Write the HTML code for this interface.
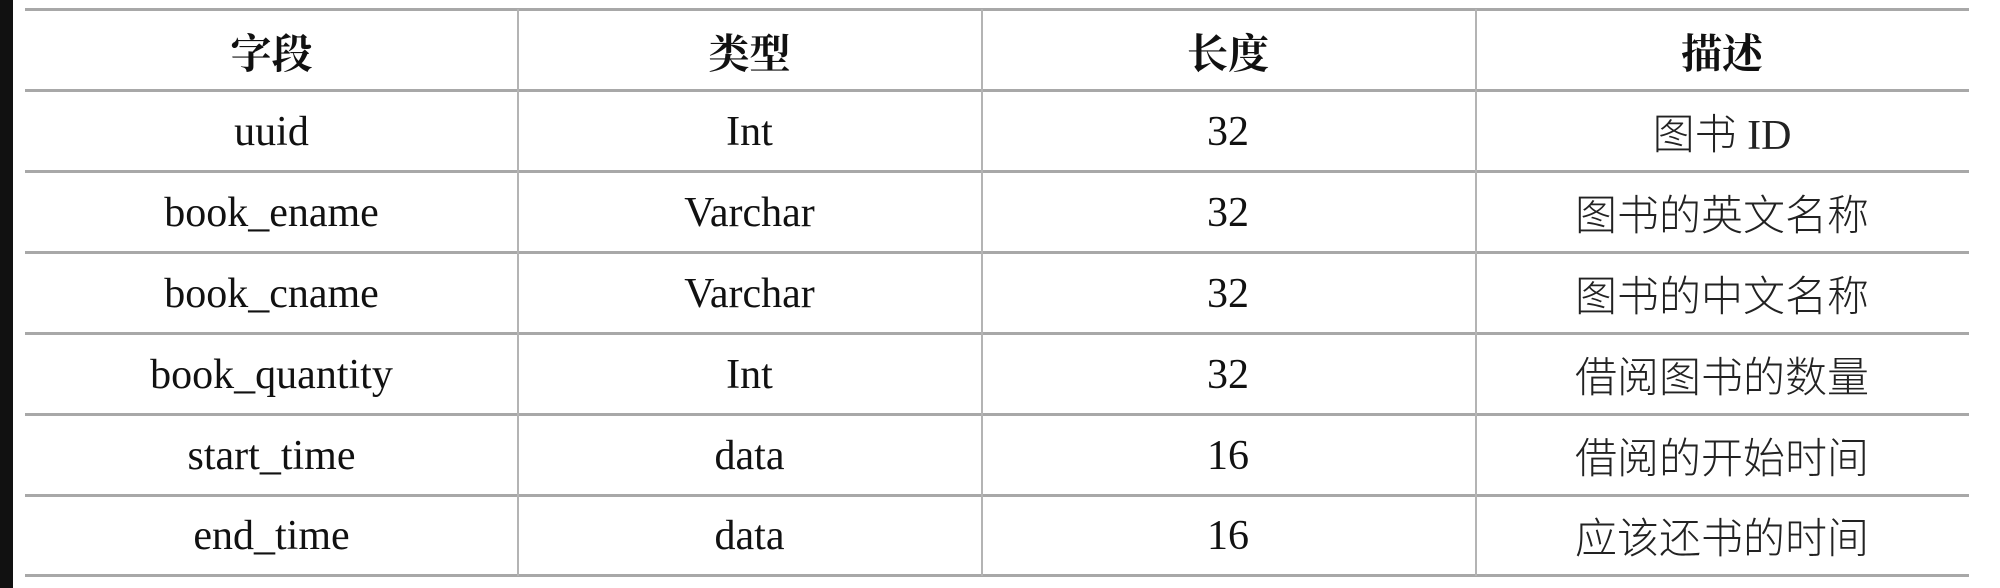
<!DOCTYPE html>
<html><head><meta charset="utf-8"><style>
html,body{margin:0;padding:0;background:#fff;}
body{width:2000px;height:588px;position:relative;overflow:hidden;}
.strip{position:absolute;left:0;top:0;width:13px;height:588px;background:#111;}
.h{position:absolute;left:25px;width:1944px;height:3px;background:#a8a8a8;}
.v{position:absolute;top:9px;height:567px;width:2px;background:#b4b4b4;}
.c{position:absolute;height:81px;display:flex;align-items:center;justify-content:center;color:#111;white-space:nowrap;}
.e{font-family:"Liberation Serif","Noto Serif CJK SC",serif;font-size:42px;}
.hd{font-family:"Liberation Serif","Noto Serif CJK SC",serif;font-size:41px;font-weight:bold;}
.z{font-family:"Liberation Serif","Noto Sans CJK SC",sans-serif;font-size:42px;font-weight:300;color:#222;}
</style></head><body>
<div class="strip"></div>
<div class="h" style="top:8px"></div>
<div class="h" style="top:89px"></div>
<div class="h" style="top:170px"></div>
<div class="h" style="top:251px"></div>
<div class="h" style="top:332px"></div>
<div class="h" style="top:413px"></div>
<div class="h" style="top:494px"></div>
<div class="h" style="top:574px"></div>
<div class="v" style="left:517px"></div>
<div class="v" style="left:981px"></div>
<div class="v" style="left:1475px"></div>

<div class="c hd" style="left:25px;width:493px;top:10px">字段</div>
<div class="c hd" style="left:518px;width:463px;top:10px">类型</div>
<div class="c hd" style="left:981px;width:494px;top:10px">长度</div>
<div class="c hd" style="left:1475px;width:494px;top:10px">描述</div>

<div class="c e" style="left:25px;width:493px;top:91px">uuid</div>
<div class="c e" style="left:518px;width:463px;top:91px">Int</div>
<div class="c e" style="left:981px;width:494px;top:91px">32</div>
<div class="c z" style="left:1475px;width:494px;top:91px">图书 ID</div>

<div class="c e" style="left:25px;width:493px;top:172px">book_ename</div>
<div class="c e" style="left:518px;width:463px;top:172px">Varchar</div>
<div class="c e" style="left:981px;width:494px;top:172px">32</div>
<div class="c z" style="left:1475px;width:494px;top:172px">图书的英文名称</div>

<div class="c e" style="left:25px;width:493px;top:253px">book_cname</div>
<div class="c e" style="left:518px;width:463px;top:253px">Varchar</div>
<div class="c e" style="left:981px;width:494px;top:253px">32</div>
<div class="c z" style="left:1475px;width:494px;top:253px">图书的中文名称</div>

<div class="c e" style="left:25px;width:493px;top:334px">book_quantity</div>
<div class="c e" style="left:518px;width:463px;top:334px">Int</div>
<div class="c e" style="left:981px;width:494px;top:334px">32</div>
<div class="c z" style="left:1475px;width:494px;top:334px">借阅图书的数量</div>

<div class="c e" style="left:25px;width:493px;top:415px">start_time</div>
<div class="c e" style="left:518px;width:463px;top:415px">data</div>
<div class="c e" style="left:981px;width:494px;top:415px">16</div>
<div class="c z" style="left:1475px;width:494px;top:415px">借阅的开始时间</div>

<div class="c e" style="left:25px;width:493px;top:495px">end_time</div>
<div class="c e" style="left:518px;width:463px;top:495px">data</div>
<div class="c e" style="left:981px;width:494px;top:495px">16</div>
<div class="c z" style="left:1475px;width:494px;top:495px">应该还书的时间</div>
</body></html>
